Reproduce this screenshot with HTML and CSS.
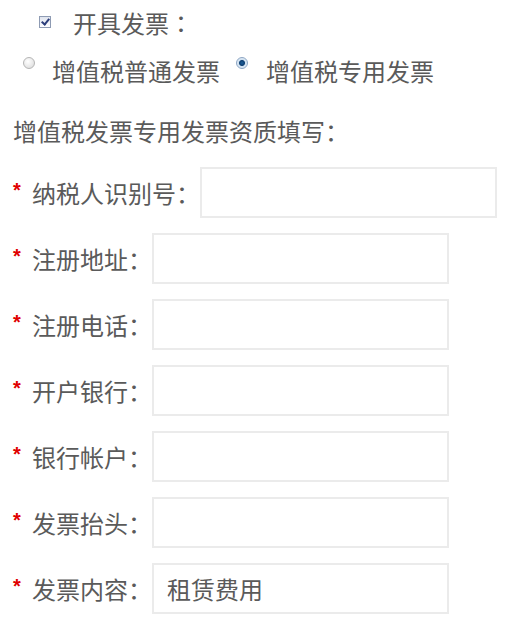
FILE: index.html
```
<!DOCTYPE html>
<html lang="zh-CN">

<head>
  <meta charset="UTF-8">
  <meta name="viewport" content="width=device-width, initial-scale=1.0">
  <title>发票信息</title>
  <link rel="stylesheet" href="styles.css">
</head>

<body>
  <form class="invoice">
    <label class="check-line">
      <span class="checkbox"></span>开具发票<span class="colon">：</span>
    </label>

    <div class="radio-line">
      <label class="radio-opt"><span class="radio"></span>增值税普通发票</label>
      <label class="radio-opt"><span class="radio on"></span>增值税专用发票</label>
    </div>

    <p class="qual-title">增值税发票专用发票资质填写<span class="colon">：</span></p>

    <ul class="fields">
      <li class="field">
        <span class="req">*</span><span class="label">纳税人识别号<span class="colon">：</span></span>
        <input class="box" type="text">
      </li>
      <li class="field">
        <span class="req">*</span><span class="label">注册地址<span class="colon">：</span></span>
        <input class="box" type="text">
      </li>
      <li class="field">
        <span class="req">*</span><span class="label">注册电话<span class="colon">：</span></span>
        <input class="box" type="text">
      </li>
      <li class="field">
        <span class="req">*</span><span class="label">开户银行<span class="colon">：</span></span>
        <input class="box" type="text">
      </li>
      <li class="field">
        <span class="req">*</span><span class="label">银行帐户<span class="colon">：</span></span>
        <input class="box" type="text">
      </li>
      <li class="field">
        <span class="req">*</span><span class="label">发票抬头<span class="colon">：</span></span>
        <input class="box" type="text">
      </li>
      <li class="field">
        <span class="req">*</span><span class="label">发票内容<span class="colon">：</span></span>
        <input class="box" type="text" value="租赁费用">
      </li>
    </ul>
  </form>
</body>

</html>
```

FILE: styles.css
```
body {
  margin: 0;
  background: #fff;
  font-family: "Noto Sans CJK SC", "Liberation Sans", sans-serif;
  font-size: 24px;
  color: #5a5a5a;
}

.invoice {
  margin: 0;
}

/* 冒号居中显示 */
.colon {
  font-family: "Noto Sans CJK TC", sans-serif;
}

.check-line {
  display: flex;
  align-items: center;
  height: 44px;
  padding-left: 39px;
}

.checkbox {
  position: relative;
  width: 10px;
  height: 10px;
  margin-right: 22px;
  border: 1px solid #8e9bb3;
  background: linear-gradient(#dfe4ee, #fdfdff);
}

.checkbox::after {
  content: "";
  position: absolute;
  left: 3px;
  top: 0;
  width: 3px;
  height: 6px;
  border: solid #2b3d7a;
  border-width: 0 2px 2px 0;
  transform: rotate(40deg);
}

.radio-line {
  display: flex;
  align-items: center;
  height: 44px;
  margin-top: 4px;
  padding-left: 23px;
}

.radio-opt {
  display: flex;
  align-items: center;
  margin-right: 16px;
}

.radio {
  width: 10px;
  height: 10px;
  margin: 0 17px 15px 0;
  border: 1px solid #b5b5b5;
  border-radius: 50%;
  background: radial-gradient(circle at 40% 35%, #fff, #d8d8d8);
}

.radio.on {
  margin-right: 18px;
  border-color: #8da6c4;
  background: radial-gradient(circle, #1d5f9a 0, #0d3f72 2.5px, #cfe0f0 3.5px, #f4f8fc 100%);
}

.qual-title {
  height: 44px;
  margin: 17px 0 0;
  padding-left: 13px;
  line-height: 44px;
}

.fields {
  display: flex;
  flex-direction: column;
  gap: 15px;
  margin: 14px 0 0;
  padding: 0;
  list-style: none;
}

.field {
  display: flex;
  align-items: center;
  height: 51px;
}

.req {
  width: 19px;
  padding-left: 13px;
  margin-top: -4px;
  font-family: "Liberation Sans", sans-serif;
  font-weight: bold;
  font-size: 20px;
  color: #e00000;
}

.label {
  white-space: nowrap;
}

.box {
  box-sizing: border-box;
  width: 297px;
  height: 51px;
  margin: 0;
  padding: 0 13px;
  border: 2px solid #ebebeb;
  outline: none;
  font: inherit;
  color: #5a5a5a;
  background: #fff;
}
```
